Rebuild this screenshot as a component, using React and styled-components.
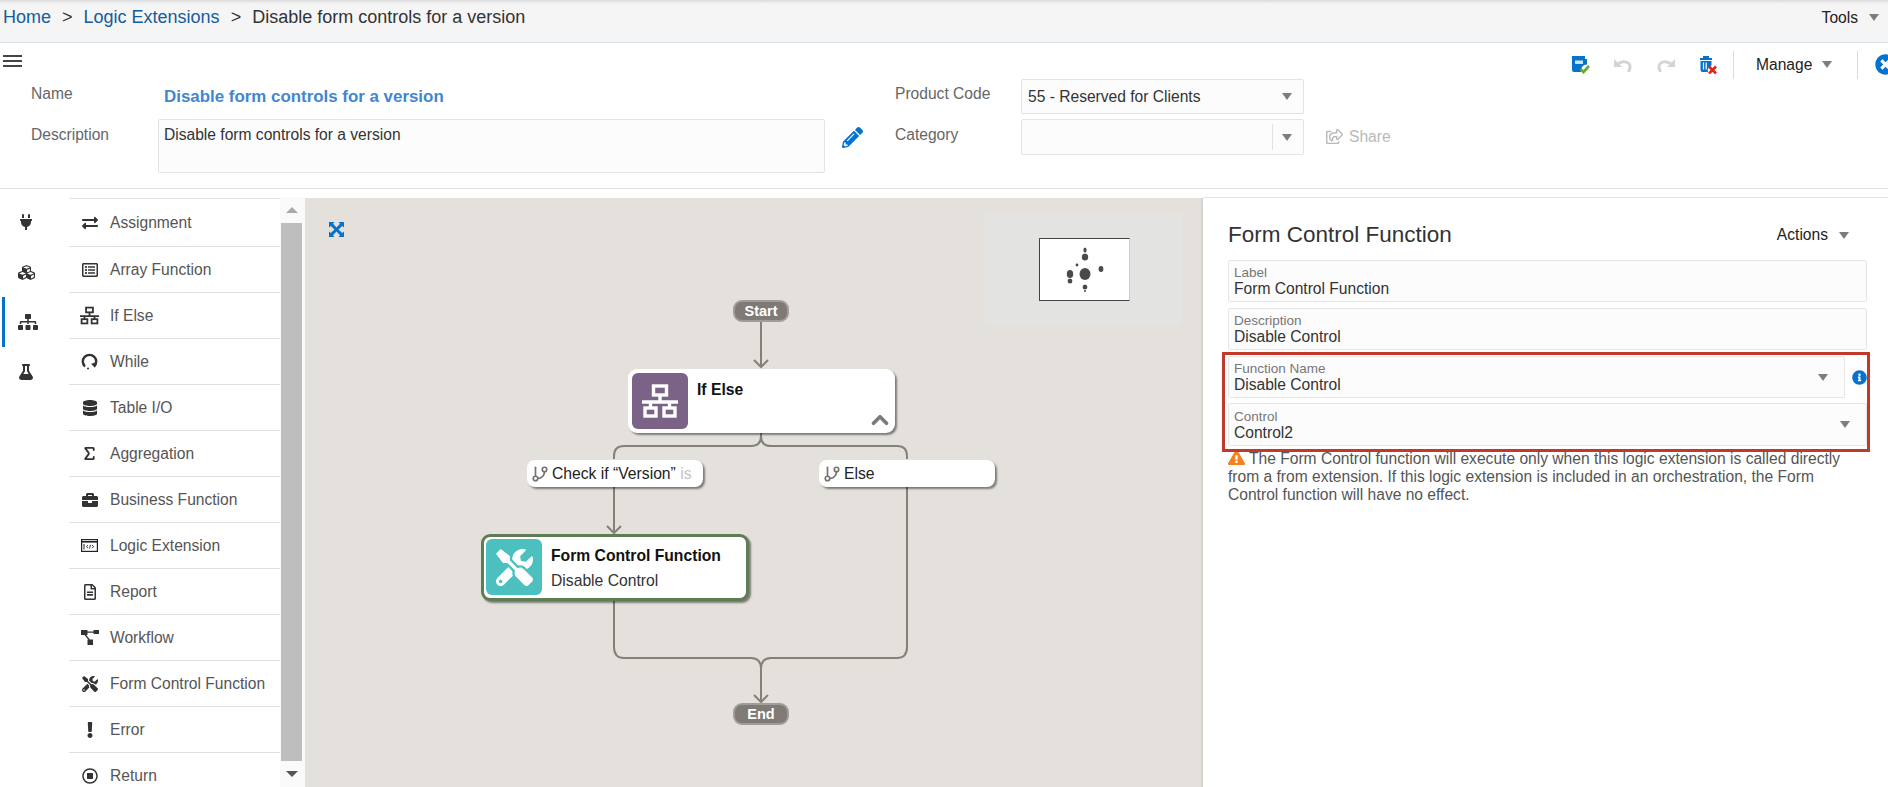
import React from 'react';
import styled, { createGlobalStyle } from 'styled-components';
import {
  FaPlug, FaCubes, FaSitemap, FaFlask, FaExchangeAlt, FaRegListAlt, FaDatabase, FaBriefcase,
  FaRegFileAlt, FaExclamation, FaRegStopCircle, FaTools, FaPencilAlt, FaInfoCircle,
  FaExclamationTriangle, FaTimesCircle, FaRegShareSquare,
} from 'react-icons/fa';
import { GitBranch, Sigma, ChevronUp } from 'lucide-react';

const GlobalStyle = createGlobalStyle`
  html, body {
    margin: 0;
    height: 787px;
    overflow: hidden;
    background: #fff;
    font-family: "Liberation Sans", Arial, sans-serif;
    font-size: 15.6px;
    color: #333;
  }
  * { box-sizing: border-box; }
`;

const Page = styled.div`
  display: flex;
  flex-direction: column;
  width: 1888px;
  height: 787px;
  overflow: hidden;
`;

const Breadcrumbs = styled.div`
  display: flex;
  align-items: center;
  justify-content: space-between;
  height: 43px;
  padding: 0 9px 6px 3px;
  background: linear-gradient(#dcdcdc 0, #f5f5f5 4px);
  border-bottom: 1px solid #d6dfe6;
`;

const Crumbs = styled.div`
  display: flex;
  align-items: center;
  font-size: 18px;
`;

const CrumbLink = styled.span`
  color: #145c9e;
`;

const CrumbSep = styled.span`
  margin: 0 11px;
  color: #333;
`;

const Caret = styled.span`
  display: inline-block;
  width: 0;
  height: 0;
  border-left: 5px solid transparent;
  border-right: 5px solid transparent;
  border-top: 7px solid ${p => p.$color || '#7d7d7d'};
`;

const MenuButton = styled.div`
  display: flex;
  align-items: center;
  gap: ${p => p.$gap || 10}px;
  color: #222;
  font-size: 15.6px;
`;

const Header = styled.div`
  height: 147px;
  border-bottom: 1px solid #e2e2e2;
`;

const ToolRow = styled.div`
  display: flex;
  align-items: flex-start;
  justify-content: space-between;
  height: 36px;
`;

const Hamburger = styled.div`
  width: 19px;
  height: 12px;
  margin: 12px 0 0 3px;
  border-top: 2px solid #444;
  border-bottom: 2px solid #444;
  position: relative;
  &::after {
    content: '';
    position: absolute;
    left: 0;
    right: 0;
    top: 3px;
    height: 2px;
    background: #444;
  }
`;

const Toolbar = styled.div`
  display: flex;
  align-items: center;
  height: 28px;
  margin-top: 8px;
  width: 316px;
  & > * {
    flex-shrink: 0;
  }
`;

const ToolIcon = styled.span`
  display: flex;
  justify-content: center;
  width: 18px;
  margin-right: ${p => p.$gap}px;
  color: ${p => p.$color || '#d4d4d4'};
`;

const ToolDivider = styled.span`
  width: 1px;
  height: 28px;
  background: #dcdcdc;
`;

const ManageWrap = styled.div`
  display: flex;
  align-items: center;
  justify-content: space-between;
  width: 123px;
  padding: 0 25px 0 22px;
`;

const CloseIcon = styled.span`
  display: flex;
  margin-left: 17px;
  color: #0572ce;
  font-size: 21px;
`;

const FormGrid = styled.div`
  display: flex;
`;

const LeftForm = styled.div`
  display: grid;
  grid-template-columns: 127px 667px 38px;
  grid-template-rows: 35px 54px;
  row-gap: 5px;
  padding-left: 31px;
  width: 895px;
`;

const RightForm = styled.div`
  display: grid;
  grid-template-columns: 126px 283px auto;
  grid-template-rows: 35px 36px;
  row-gap: 5px;
`;

const FormLabel = styled.div`
  padding-top: ${p => p.$top || 6}px;
  color: #666;
  font-size: 15.6px;
  line-height: 18px;
`;

const NameValue = styled.div`
  display: flex;
  align-items: center;
  padding: 1px 0 0 6px;
  color: #3f87cf;
  font-weight: 700;
  font-size: 16.9px;
`;

const DescBox = styled.div`
  padding: 6px 5px;
  line-height: 18px;
  color: #333;
  background: #fcfcfc;
  border: 1px solid #e4e4e4;
  border-radius: 2px;
`;

const EditIcon = styled.div`
  padding: 8px 0 0 17px;
  color: #0572ce;
  font-size: 21px;
`;

const SelectBox = styled.div`
  display: flex;
  align-items: center;
  justify-content: space-between;
  padding: 1px 11px 0 6px;
  background: #fcfcfc;
  border: 1px solid #e4e4e4;
  border-radius: 2px;
  color: #333;
`;

const SelectDivider = styled.span`
  width: 1px;
  height: 26px;
  margin-left: auto;
  margin-right: 9px;
  background: #e2e2e2;
`;

const ShareLink = styled.div`
  display: flex;
  align-items: center;
  gap: 6px;
  padding-left: 22px;
  color: #b9b9b9;
  font-size: 15.6px;
`;

const Workspace = styled.div`
  display: flex;
  height: 598px;
  padding-top: 8px;
`;

const Rail = styled.div`
  width: 69px;
  flex-shrink: 0;
`;

const RailItem = styled.div`
  display: flex;
  align-items: center;
  height: 50px;
  padding-left: 13px;
  color: #333;
  font-size: ${p => p.$size || 16}px;
  border-left: 3px solid ${p => (p.$active ? '#0572ce' : 'transparent')};
  margin-left: 2px;
`;

const Palette = styled.div`
  width: 211px;
  flex-shrink: 0;
  margin-top: 1px;
  overflow: hidden;
  border-top: 1px solid #e4e4e4;
`;

const PaletteRow = styled.div`
  display: flex;
  align-items: center;
  height: 46px;
  border-bottom: 1px solid #e0e0e0;
  color: #555;
  font-size: 15.6px;
  &:first-child {
    height: 48px;
  }
`;

const PaletteIcon = styled.span`
  display: flex;
  justify-content: center;
  width: 41px;
  color: #333;
  font-size: 16px;
`;

const ScrollTrack = styled.div`
  display: flex;
  flex-direction: column;
  align-items: center;
  width: 25px;
  flex-shrink: 0;
  padding-right: 2px;
  background: #fafafa;
`;

const ScrollButton = styled.div`
  display: flex;
  align-items: center;
  justify-content: center;
  height: 26px;
  width: 100%;
  flex-shrink: 0;
`;

const ScrollThumb = styled.div`
  width: 21px;
  flex: 1;
  background: #bebebe;
`;

const ScrollArrow = styled.span`
  width: 0;
  height: 0;
  border-left: 6px solid transparent;
  border-right: 6px solid transparent;
  ${p => (p.$down ? 'border-top: 6px solid #555;' : 'border-bottom: 6px solid #aaa;')}
`;

const Canvas = styled.div`
  position: relative;
  width: 898px;
  flex-shrink: 0;
  margin-top: 1px;
  background: #e4e1dc;
  border-right: 2px solid #d6d3d0;
`;

const ExpandIcon = styled.span`
  position: absolute;
  left: 24px;
  top: 24px;
  display: flex;
  color: #0572ce;
`;

const Minimap = styled.div`
  position: absolute;
  left: 680px;
  top: 15px;
  width: 197px;
  height: 113px;
  padding: 25px 54px;
  background: #e3e4e2;
`;

const MinimapView = styled.div`
  width: 91px;
  height: 63px;
  background: #fff;
  border: 1px solid #444;
  border-right-color: #ccc;
`;

const Wires = styled.svg`
  position: absolute;
  left: 0;
  top: 0;
`;

const Pill = styled.div`
  position: absolute;
  left: ${p => p.$x}px;
  top: ${p => p.$y}px;
  display: flex;
  align-items: center;
  justify-content: center;
  width: 56px;
  height: 22px;
  border-radius: 9px;
  background: #7f7a75;
  border: 2px solid #a09c98;
  color: #fff;
  font-weight: 700;
  font-size: 14.5px;
`;

const NodeCard = styled.div`
  position: absolute;
  left: ${p => p.$x}px;
  top: ${p => p.$y}px;
  display: flex;
  width: ${p => p.$w}px;
  height: ${p => p.$h}px;
  padding: ${p => (p.$selected ? 2 : 4)}px;
  background: #fff;
  border-radius: 9px;
  border: ${p => (p.$selected ? '3px solid #5f7d54' : 'none')};
  box-shadow: 2px 2px 2px rgba(0, 0, 0, 0.45);
`;

const NodeIcon = styled.div`
  display: flex;
  align-items: center;
  justify-content: center;
  width: 56px;
  height: 56px;
  flex-shrink: 0;
  border-radius: 6px;
  background: ${p => p.$color};
  color: #fff;
`;

const NodeText = styled.div`
  padding: 8px 0 0 9px;
  white-space: nowrap;
`;

const NodeTitle = styled.div`
  color: #111;
  font-weight: 700;
  font-size: 15.7px;
  line-height: 17px;
`;

const NodeSub = styled.div`
  margin-top: 8px;
  color: #333;
  font-size: 15.7px;
  line-height: 17px;
`;

const CollapseIcon = styled.span`
  position: absolute;
  right: 2px;
  bottom: 0;
  display: flex;
  color: #7f7a75;
`;

const BranchCard = styled.div`
  position: absolute;
  left: ${p => p.$x}px;
  top: ${p => p.$y}px;
  display: flex;
  align-items: center;
  gap: 3px;
  width: 176px;
  height: 27px;
  padding-left: 4px;
  overflow: hidden;
  background: #fff;
  border-radius: 8px;
  box-shadow: 2px 2px 2px rgba(0, 0, 0, 0.45);
  color: #222;
  font-size: 15.7px;
  white-space: nowrap;
`;

const FadeText = styled.span`
  color: #c4c4c4;
`;

const BranchIcon = styled.span`
  display: flex;
  color: #77726d;
`;

const Panel = styled.div`
  flex: 1;
  padding: 24px 21px 0 25px;
  border-top: 1px solid #e4e4e4;
`;

const PanelHead = styled.div`
  display: flex;
  align-items: center;
  justify-content: space-between;
  height: 26px;
  margin-bottom: 12px;
  padding-right: 18px;
`;

const PanelTitle = styled.div`
  color: #333;
  font-size: 22.5px;
`;

const FieldStack = styled.div`
  display: flex;
  flex-direction: column;
  gap: ${p => p.$gap || 6}px;
`;

const Field = styled.div`
  display: flex;
  flex: none;
  align-items: center;
  justify-content: space-between;
  height: ${p => p.$h || 42}px;
  padding: 0 16px 0 5px;
  background: #fcfcfc;
  border: 1px solid #e6e6e6;
  border-radius: 2px;
`;

const RowField = styled(Field)`
  flex: 1;
`;

const FieldLabel = styled.div`
  color: #777;
  font-size: 13.5px;
  line-height: 15px;
`;

const FieldValue = styled.div`
  color: #333;
  font-size: 15.6px;
  line-height: 17px;
`;

const FieldRow = styled.div`
  display: flex;
  align-items: center;
`;

const InfoIcon = styled.span`
  display: flex;
  width: 22px;
  justify-content: flex-end;
  color: #0572ce;
  font-size: 15px;
`;

const Highlight = styled.div`
  position: relative;
  z-index: 2;
  margin: 2px -3px 0 -6px;
  padding: 1px 0 3px 3px;
  border: 3px solid #c0392b;
`;

const Notice = styled.div`
  margin-top: -3px;
  color: #555;
  font-size: 15.6px;
  line-height: 18px;
`;

const WarnIcon = styled(FaExclamationTriangle)`
  margin-right: 4px;
  color: #f5821f;
  font-size: 17px;
  vertical-align: -2px;
`;

const SaveIcon = () => (
  <svg width="18" height="18" viewBox="0 0 18 18">
    <path d="M0 0h13v3H0zM0 3h15v5.5a6 6 0 0 0-6 7.5H2a2 2 0 0 1-2-2z" fill="#0572ce" />
    <rect x="3" y="4.5" width="8" height="3.5" fill="#cfe3f5" />
    <path d="M8.5 13l3 3 5.5-6" fill="none" stroke="#6aa82c" strokeWidth="2.6" />
  </svg>
);

const TrashXIcon = () => (
  <svg width="18" height="18" viewBox="0 0 18 18">
    <path d="M4 0h6v2h3v2H1V2h3zM1.5 5h11v4.5a5 5 0 0 0-3.5 6.5H3.5a2 2 0 0 1-2-2z" fill="#0572ce" />
    <path d="M4.5 6.5v7M7.2 6.5v7" stroke="#fff" strokeWidth="1.2" />
    <path d="M10 10.5l7 7M17 10.5l-7 7" stroke="#e2231a" strokeWidth="2.6" />
  </svg>
);

const UndoShape = () => (
  <>
    <path d="M0 1v8h8z" fill="currentColor" />
    <path d="M4 6C8 2.500 15.500 3 16 8.500C16.200 10.500 15.500 12.500 14 14" fill="none" stroke="currentColor" strokeWidth="3" />
  </>
);

const UndoIcon = () => (
  <svg width="18" height="14" viewBox="0 0 18 14"><UndoShape /></svg>
);

const RedoIcon = () => (
  <svg width="18" height="14" viewBox="0 0 18 14">
    <g transform="matrix(-1 0 0 1 18 0)"><UndoShape /></g>
  </svg>
);

const IfElseIcon = ({ size = 16 }) => (
  <svg width={size} height={size} viewBox="0 0 36 34" fill="none" stroke="currentColor" strokeWidth="3.4">
    <rect x="11.5" y="2" width="13" height="9" />
    <path d="M18 11v7M0 18h36" />
    <rect x="3" y="24" width="11" height="8" />
    <rect x="22" y="24" width="11" height="8" />
    <path d="M8.500 18v6M27.500 18v6" />
  </svg>
);

const WhileIcon = () => (
  <svg width="17" height="17" viewBox="0 0 17 17" fill="none" stroke="currentColor">
    <path d="M4 13.500A6.700 6.700 0 1 1 13 13.500" strokeWidth="2.400" />
    <path d="M10.500 11l3.400 3.200.2-4.400z" fill="currentColor" strokeWidth="0.5" />
    <circle cx="7" cy="15.500" r="1" fill="currentColor" stroke="none" />
    <circle cx="3" cy="11" r="0.8" fill="currentColor" stroke="none" />
  </svg>
);

const LogicExtIcon = () => (
  <svg width="17" height="13" viewBox="0 0 17 13" fill="none" stroke="#222">
    <rect x="0.6" y="0.6" width="15.8" height="11.8" strokeWidth="1.2" />
    <path d="M0.6 2.8h15.8" strokeWidth="1.6" />
    <path d="M3 5v5.500" strokeWidth="1" />
    <path d="M7 6l-1.600 1.600L7 9.200M11 6l1.600 1.600L11 9.200M9.600 5.800L8.400 9.600" strokeWidth="0.9" />
  </svg>
);

const WorkflowIcon = () => (
  <svg width="18" height="15" viewBox="0 0 18 15">
    <rect x="0" y="0" width="6.500" height="5" fill="#333" />
    <rect x="12.500" y="0" width="5.500" height="4" fill="#333" />
    <rect x="6.500" y="9.500" width="5.500" height="5.500" fill="#333" />
    <path d="M6 2.200h7M3.500 4l5 6" stroke="#333" strokeWidth="1.2" fill="none" />
  </svg>
);

const ExpandArrows = () => (
  <svg width="15" height="15" viewBox="0 0 15 15">
    <path d="M0 0h5.500L4 1.800l3.500 3.700L11 1.800 9.500 0H15v5.500l-1.800-1.500-3.700 3.500 3.700 3.500L15 9.500V15H9.500l1.500-1.800-3.500-3.700L4 13.200 5.500 15H0V9.500L1.800 11l3.700-3.500L1.800 4 0 5.500z" fill="currentColor" />
  </svg>
);

const paletteItems = [
  ['Assignment', <FaExchangeAlt />],
  ['Array Function', <FaRegListAlt />],
  ['If Else', <IfElseIcon size={19} />],
  ['While', <WhileIcon />],
  ['Table I/O', <FaDatabase />],
  ['Aggregation', <Sigma size={17} strokeWidth={2.6} />],
  ['Business Function', <FaBriefcase />],
  ['Logic Extension', <LogicExtIcon />],
  ['Report', <FaRegFileAlt />],
  ['Workflow', <WorkflowIcon />],
  ['Form Control Function', <FaTools />],
  ['Error', <FaExclamation />],
  ['Return', <FaRegStopCircle />],
];

// canvas origin is at 305,198 in these coordinates
const Diagram = () => (
  <Wires width="896" height="588" viewBox="305 198 896 588" fill="none" stroke="#85807a" strokeWidth="2">
    <path d="M761 322V367M754 360l7 7 7-7" />
    <path d="M761 433v3c0 7-3 10-10 10H624c-7 0-10 3-10 10v3" />
    <path d="M761 433v3c0 7 3 10 10 10H897c7 0 10 3 10 10v3" />
    <path d="M614 487V533M607 526l7 7 7-7" />
    <path d="M614 601V647c0 7 3 11 10 11H751c7 0 10 4 10 11" />
    <path d="M907 487V647c0 7-3 11-10 11H771c-7 0-10 4-10 11" />
    <path d="M761 669V702M754 695l7 7 7-7" />
  </Wires>
);

function App() {
  return (
    <Page>
      <GlobalStyle />
      <Breadcrumbs>
        <Crumbs>
          <CrumbLink>Home</CrumbLink>
          <CrumbSep>&gt;</CrumbSep>
          <CrumbLink>Logic Extensions</CrumbLink>
          <CrumbSep>&gt;</CrumbSep>
          <span>Disable form controls for a version</span>
        </Crumbs>
        <MenuButton $gap={11}>Tools <Caret /></MenuButton>
      </Breadcrumbs>

      <Header>
        <ToolRow>
          <Hamburger />
          <Toolbar>
            <ToolIcon $gap={24} $color="#0572ce"><SaveIcon /></ToolIcon>
            <ToolIcon $gap={25}><UndoIcon /></ToolIcon>
            <ToolIcon $gap={24}><RedoIcon /></ToolIcon>
            <ToolIcon $gap={16}><TrashXIcon /></ToolIcon>
            <ToolDivider />
            <ManageWrap><MenuButton>Manage</MenuButton><Caret /></ManageWrap>
            <ToolDivider />
            <CloseIcon><FaTimesCircle /></CloseIcon>
          </Toolbar>
        </ToolRow>
        <FormGrid>
          <LeftForm>
            <FormLabel>Name</FormLabel>
            <NameValue>Disable form controls for a version</NameValue>
            <span />
            <FormLabel $top={7}>Description</FormLabel>
            <DescBox>Disable form controls for a version</DescBox>
            <EditIcon><FaPencilAlt /></EditIcon>
          </LeftForm>
          <RightForm>
            <FormLabel>Product Code</FormLabel>
            <SelectBox>55 - Reserved for Clients <Caret /></SelectBox>
            <span />
            <FormLabel $top={7}>Category</FormLabel>
            <SelectBox><SelectDivider /><Caret /></SelectBox>
            <ShareLink><FaRegShareSquare size={17} /> Share</ShareLink>
          </RightForm>
        </FormGrid>
      </Header>

      <Workspace>
        <Rail>
          <RailItem><FaPlug /></RailItem>
          <RailItem $size={17}><FaCubes /></RailItem>
          <RailItem $active $size={20}><FaSitemap /></RailItem>
          <RailItem><FaFlask /></RailItem>
        </Rail>

        <Palette>
          {paletteItems.map(([label, icon]) => (
            <PaletteRow key={label}>
              <PaletteIcon>{icon}</PaletteIcon>
              {label}
            </PaletteRow>
          ))}
        </Palette>

        <ScrollTrack>
          <ScrollButton><ScrollArrow /></ScrollButton>
          <ScrollThumb />
          <ScrollButton><ScrollArrow $down /></ScrollButton>
        </ScrollTrack>

        <Canvas>
          <ExpandIcon><ExpandArrows /></ExpandIcon>
          <Minimap>
            <MinimapView>
              <svg width="89" height="61" viewBox="1040 240 89 61" fill="#4a4a4a">
                <ellipse cx="1085" cy="275" rx="5.5" ry="6" />
                <ellipse cx="1085" cy="258" rx="3.2" ry="3.5" />
                <ellipse cx="1085" cy="251" rx="1.6" ry="2.5" />
                <ellipse cx="1070" cy="275" rx="3.2" ry="4" />
                <ellipse cx="1070" cy="282" rx="2.4" ry="2.5" />
                <circle cx="1077" cy="266" r="1.4" />
                <ellipse cx="1101" cy="270" rx="2.4" ry="3" />
                <ellipse cx="1085" cy="288" rx="2.4" ry="2.5" />
                <circle cx="1085" cy="292" r="1" />
              </svg>
            </MinimapView>
          </Minimap>
          <Diagram />
          <Pill $x={428} $y={102}>Start</Pill>
          <NodeCard $x={323} $y={171} $w={267} $h={64}>
            <NodeIcon $color="#7b6287"><IfElseIcon size={36} /></NodeIcon>
            <NodeText><NodeTitle>If Else</NodeTitle></NodeText>
            <CollapseIcon><ChevronUp size={26} strokeWidth={3.4} /></CollapseIcon>
          </NodeCard>
          <BranchCard $x={222} $y={262}>
            <BranchIcon><GitBranch size={18} strokeWidth={2.2} /></BranchIcon>
            <span>Check if “Version” <FadeText>is</FadeText></span>
          </BranchCard>
          <BranchCard $x={514} $y={262}>
            <BranchIcon><GitBranch size={18} strokeWidth={2.2} /></BranchIcon>
            <span>Else</span>
          </BranchCard>
          <NodeCard $selected $x={176} $y={336} $w={268} $h={67}>
            <NodeIcon $color="#4cc0bf"><FaTools size={37} /></NodeIcon>
            <NodeText>
              <NodeTitle>Form Control Function</NodeTitle>
              <NodeSub>Disable Control</NodeSub>
            </NodeText>
          </NodeCard>
          <Pill $x={428} $y={505}>End</Pill>
        </Canvas>

        <Panel>
          <PanelHead>
            <PanelTitle>Form Control Function</PanelTitle>
            <MenuButton $gap={11}>Actions <Caret /></MenuButton>
          </PanelHead>
          <FieldStack>
            <Field>
              <div>
                <FieldLabel>Label</FieldLabel>
                <FieldValue>Form Control Function</FieldValue>
              </div>
            </Field>
            <Field>
              <div>
                <FieldLabel>Description</FieldLabel>
                <FieldValue>Disable Control</FieldValue>
              </div>
            </Field>
          </FieldStack>
          <Highlight>
            <FieldStack $gap={5}>
              <FieldRow>
                <RowField>
                  <div>
                    <FieldLabel>Function Name</FieldLabel>
                    <FieldValue>Disable Control</FieldValue>
                  </div>
                  <Caret />
                </RowField>
                <InfoIcon><FaInfoCircle /></InfoIcon>
              </FieldRow>
              <Field $h={43}>
                <div>
                  <FieldLabel>Control</FieldLabel>
                  <FieldValue>Control2</FieldValue>
                </div>
                <Caret />
              </Field>
            </FieldStack>
          </Highlight>
          <Notice>
            <WarnIcon />The Form Control function will execute only when this logic extension is called directly
            from a from extension. If this logic extension is included in an orchestration, the Form
            Control function will have no effect.
          </Notice>
        </Panel>
      </Workspace>
    </Page>
  );
}

export default App;
